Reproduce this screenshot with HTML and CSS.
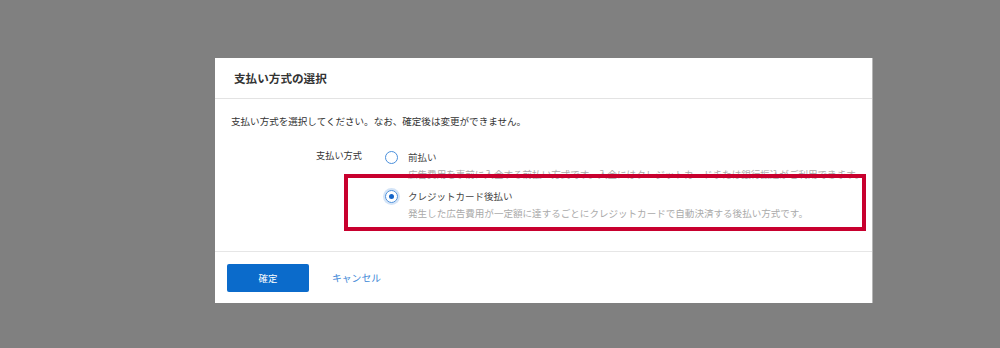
FILE: index.html
```html
<!DOCTYPE html>
<html lang="ja">
<head>
    <meta charset="UTF-8">
    <meta name="viewport" content="width=device-width, initial-scale=1.0">
    <title>支払い方式の選択</title>
    <link rel="stylesheet" href="styles.css">
</head>
<body>

<div class="dialog">
    <div class="dialog-header">
        <h2>支払い方式の選択</h2>
    </div>
    <div class="dialog-body">
        <p class="intro">支払い方式を選択してください。なお、確定後は変更ができません。</p>
        <div class="form-row">
            <div class="form-label">支払い方式</div>
            <div class="options">
                <label class="option">
                    <span class="radio"></span>
                    <span class="option-text">
                        <span class="option-title">前払い</span>
                        <span class="option-desc">広告費用を事前に入金する前払い方式です。入金にはクレジットカードまたは銀行振込がご利用できます。</span>
                    </span>
                </label>
                <label class="option">
                    <span class="radio checked"></span>
                    <span class="option-text">
                        <span class="option-title">クレジットカード後払い</span>
                        <span class="option-desc">発生した広告費用が一定額に達するごとにクレジットカードで自動決済する後払い方式です。</span>
                    </span>
                </label>
            </div>
        </div>
    </div>
    <div class="dialog-footer">
        <button class="btn-primary">確定</button>
        <a class="btn-link" href="#">キャンセル</a>
    </div>
    <!-- highlight frame over the second option -->
    <div class="highlight"></div>
</div>

</body>
</html>
```

FILE: styles.css
```css
body {
    font-family: "Noto Sans CJK JP", "Noto Sans", sans-serif;
    background-color: #808080;
    margin: 0;
    padding: 58px 0 0 215px;
    color: #333;
}
.dialog {
    position: relative;
    width: 657px;
    height: 245px;
    background: #fff;
    box-shadow: 1px 0 0 #b5b5b5;
    display: flex;
    flex-direction: column;
}
.dialog-header {
    height: 40px;
    padding-left: 19px;
    border-bottom: 1px solid #e3e3e3;
    display: flex;
    align-items: center;
}
.dialog-header h2 {
    margin: 0;
    font-size: 11.6px;
    font-weight: bold;
    color: #333;
}
.dialog-body {
    height: 152px;
    padding: 0 16px;
    box-sizing: border-box;
}
.intro {
    margin: 15px 0 0;
    font-size: 9.55px;
    line-height: 14px;
}
.form-row {
    display: flex;
    margin-top: 20px;
}
.form-label {
    flex: none;
    width: 131px;
    text-align: right;
    font-size: 9.2px;
    line-height: 14px;
    margin-right: 23px;
}
.options {
    display: flex;
    flex-direction: column;
    gap: 5px;
}
.option {
    display: flex;
    align-items: flex-start;
}
.radio {
    width: 11px;
    height: 11px;
    border: 1px solid #4a8fdb;
    border-radius: 50%;
    margin: 3px 10px 0 0;
    flex: none;
    position: relative;
    box-sizing: content-box;
}
.radio.checked {
    box-shadow: 0 0 0 2px #d4e4f7;
}
.radio.checked::after {
    content: "";
    position: absolute;
    left: 3px;
    top: 3px;
    width: 5px;
    height: 5px;
    border-radius: 50%;
    background: #1565c8;
}
.option-text {
    display: flex;
    flex-direction: column;
}
.option-title {
    font-size: 9.5px;
    line-height: 18px;
    color: #444;
}
.option-desc {
    font-size: 9.55px;
    line-height: 16px;
    color: #aaa;
    white-space: nowrap;
}
.dialog-footer {
    flex: 1;
    border-top: 1px solid #e6e6e6;
    padding: 12px 0 0 12px;
    display: flex;
    align-items: flex-start;
}
.btn-primary {
    width: 82px;
    height: 28px;
    background: #0b6bcb;
    border: none;
    border-radius: 2px;
    color: #fff;
    font-family: inherit;
    font-size: 9.4px;
}
.btn-link {
    margin-left: 23px;
    line-height: 28px;
    font-size: 9.8px;
    color: #3d86d6;
    text-decoration: none;
}
.highlight {
    position: absolute;
    left: 129px;
    top: 116px;
    width: 522px;
    height: 57px;
    border: 4px solid #c8002e;
    box-sizing: border-box;
}
```
